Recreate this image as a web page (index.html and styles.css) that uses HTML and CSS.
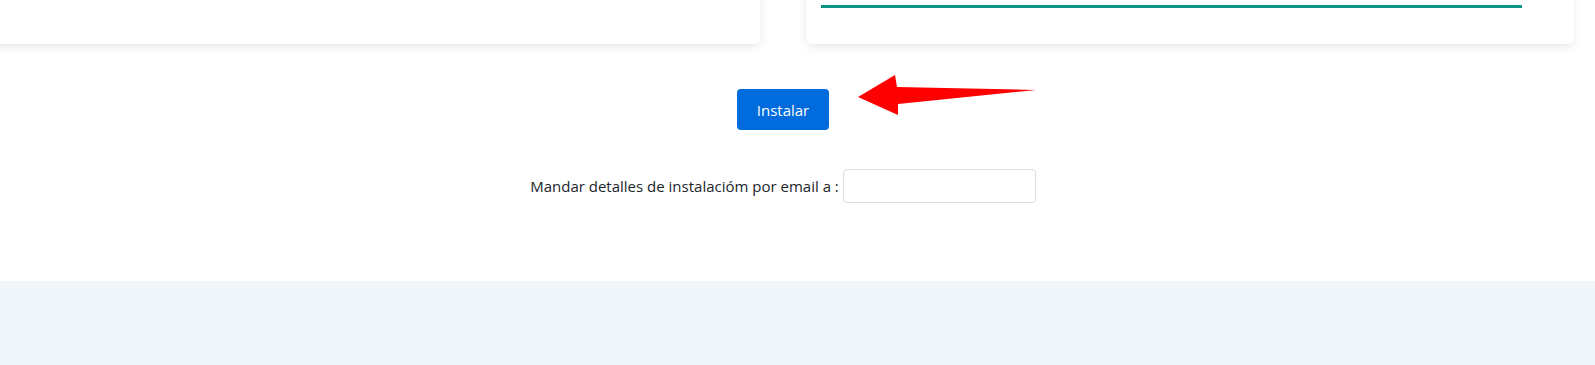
FILE: index.html
```html
<!DOCTYPE html>
<html lang="es">
<head>
<meta charset="UTF-8">
<meta name="viewport" content="width=device-width, initial-scale=1.0">
<title>Instalar</title>
<link rel="stylesheet" href="styles.css">
</head>
<body>
<div class="panel">
    <div class="cards">
        <div class="card"></div>
        <div class="card">
            <div class="progress">
                <div class="progress-fill" style="width: 95%"></div>
            </div>
        </div>
    </div>
    <div class="install">
        <div class="install-btn-wrap">
            <button type="button" class="btn-install">Instalar</button>
            <!-- red arrow pointing at the button -->
            <svg class="arrow" width="182" height="44" viewBox="0 0 182 44">
                <polygon points="2,24 39,2 41,14 180,17 42,31 42,42" fill="#ff0000"/>
            </svg>
        </div>
        <form class="email-row">
            <label for="installEmail">Mandar detalles de instalacióm por email a :</label>
            <input type="email" id="installEmail">
        </form>
    </div>
</div>
</body>
</html>
```

FILE: styles.css
```css
body {
    margin: 0;
    padding: 0;
    background-color: #f0f5f9;
    font-family: 'Open Sans', 'Liberation Sans', sans-serif;
    color: #212529;
}
.panel {
    background-color: #fff;
    padding-bottom: 78px;
    box-shadow: 0 3px 8px rgba(0, 0, 0, 0.16);
}
.cards {
    display: grid;
    grid-template-columns: 1fr 1fr;
    gap: 46px;
    margin: 0 21px 0 -8px;
}
.card {
    height: 64px;
    margin-top: -20px;
    padding: 25px 15px 0;
    box-sizing: border-box;
    background-color: #fff;
    border-radius: 6px;
    box-shadow: 0 3px 10px rgba(0, 0, 0, 0.09);
}
.progress {
    height: 3px;
}
.progress-fill {
    height: 100%;
    background-color: #0b9484;
}
.install {
    display: flex;
    flex-direction: column;
    align-items: center;
    margin: 0 21px 0 -8px;
}
.install-btn-wrap {
    position: relative;
    margin-top: 45px;
}
.btn-install {
    display: block;
    height: 41px;
    padding: 0 20px;
    border: none;
    border-radius: 4px;
    background-color: #006bdc;
    color: #fff;
    font-family: inherit;
    font-size: 15px;
    cursor: pointer;
}
.arrow {
    position: absolute;
    left: calc(100% + 27px);
    top: -16px;
}
.email-row {
    display: flex;
    align-items: center;
    gap: 4px;
    margin-top: 39px;
    font-size: 15px;
}
.email-row input {
    width: 193px;
    height: 34px;
    box-sizing: border-box;
    border: 1px solid #dedede;
    border-radius: 4px;
    padding: 4px 8px;
}
```
